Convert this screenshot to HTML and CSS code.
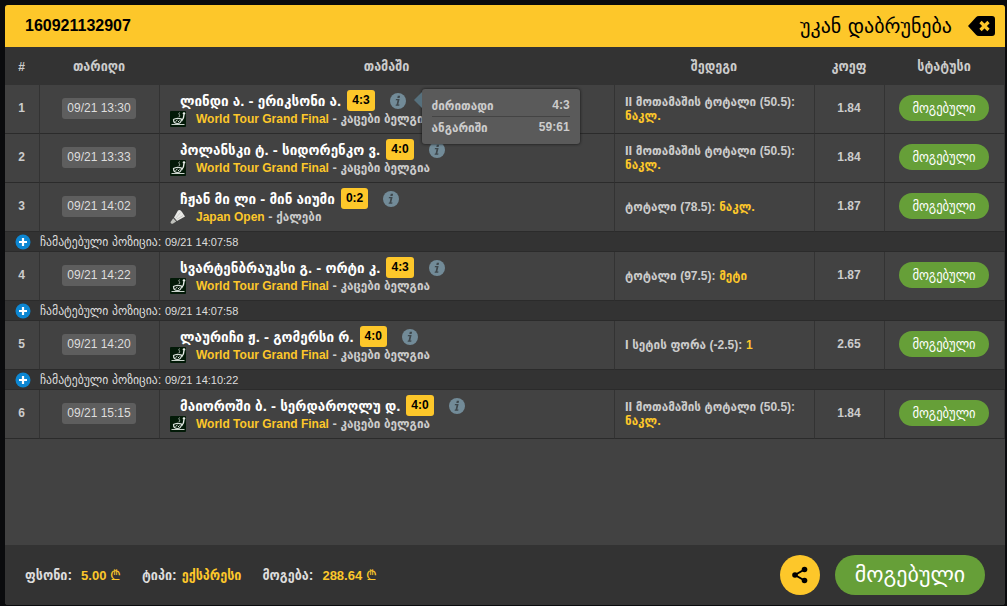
FILE: index.html
```html
<!DOCTYPE html>
<html lang="ka">
<head>
<meta charset="utf-8">
<title>160921132907</title>
<link rel="stylesheet" href="styles.css">
</head>
<body>
<svg class="sprite" aria-hidden="true">
  <symbol id="info" viewBox="0 0 16 16">
    <circle cx="8" cy="8" r="8" fill="#728b98"/>
    <path d="M7.8 2.7h2.3l-.5 2.2H7.3zM6 6h3.6l-1.3 5.4h1.2l-.3 1.3H5.6l.3-1.3h.7l.9-4.1H5.7z" fill="#3e474c"/>
  </symbol>
  <symbol id="snooker" viewBox="0 0 16 16">
    <rect width="16" height="16" rx="1" fill="#031a08"/>
    <path d="M1.500 13.500h13" stroke="#c9d3cb" fill="none"/>
    <circle cx="14" cy="2.500" r="1.300" fill="#e6ece7"/>
    <path d="M14 3.500c0 3-1 5-2.500 6.500" stroke="#e6ece7" stroke-width="1.400" fill="none"/>
    <path d="M9.500 1.500c-2 1.500 1.500 2.500-.5 4.500" stroke="#aab5ac" fill="none"/>
    <path d="M3.500 8.500c2-1.500 6-1.500 8-.5-.2 3-2 4.500-4 4.500s-4-1-4-4z" fill="none" stroke="#d7dfd9" stroke-width="1.200"/>
    <path d="M5.500 10.500l2-1.500M8 11l1.500-1.500" stroke="#d7dfd9"/>
  </symbol>
  <symbol id="shuttle" viewBox="0 0 16 16">
    <path d="M8 1.500Q10 0 12 3L15 7.500 7 12 4 8.500z" fill="#e9e9e6"/>
    <path d="M5.500 9.500l5-6M6.500 10.500l6.500-4" stroke="#b5b5b0" stroke-width=".6"/>
    <path d="M3.200 9.300l3 3.200-3.500 2.300c-1 .3-2.500-.8-2.100-1.800z" fill="#bfc0bb"/>
  </symbol>
  <symbol id="plus" viewBox="0 0 16 16">
    <circle cx="8" cy="8" r="7.500" fill="#0d87d2"/>
    <path d="M8 4v8M4 8h8" stroke="#fff" stroke-width="2.200"/>
  </symbol>
</svg>
<main class="ticket">
  <header class="bar">
    <h1 class="number">160921132907</h1>
    <button class="back" type="button">უკან დაბრუნება
      <svg class="back-icon" viewBox="0 0 27 20" aria-hidden="true">
        <path d="M0 10L8 1.200Q9 0 11 0h13q3 0 3 3v14q0 3-3 3H11q-2 0-3-1.200z"/>
        <path d="M12.500 6l8 8M20.500 6l-8 8" stroke="#fdc72a" stroke-width="3.200"/>
      </svg>
    </button>
  </header>
  <table class="bets">
    <colgroup><col class="c-num"><col class="c-date"><col class="c-game"><col class="c-result"><col class="c-odds"><col class="c-status"></colgroup>
    <thead>
      <tr><th><span class="num">#</span></th><th>თარიღი</th><th>თამაში</th><th>შედეგი</th><th>კოეფ</th><th>სტატუსი</th></tr>
    </thead>
    <tbody>
      <tr class="bet">
        <td>1</td><td><time class="date">09/21 13:30</time></td>
        <td class="game">
          <div class="match"><span>ლინდი ა. - ერიკსონი ა.</span><b class="score">4:3</b>
            <span class="info"><svg class="icon"><use href="#info"/></svg>
              <span class="tip" role="tooltip">
                <span class="tip-row"><span>ძირითადი</span><b class="num">4:3</b></span>
                <span class="tip-row"><span>ანგარიში</span><b class="num">59:61</b></span>
              </span>
            </span>
          </div>
          <div class="league"><svg class="icon"><use href="#snooker"/></svg><p class="name"><b>World Tour Grand Final</b> - კაცები ბელგია</p></div>
        </td>
        <td class="result">II მოთამაშის ტოტალი <span class="num">(50.5):</span> <b>ნაკლ.</b></td>
        <td>1.84</td><td><span class="pill">მოგებული</span></td>
      </tr>
      <tr class="bet">
        <td>2</td><td><time class="date">09/21 13:33</time></td>
        <td class="game">
          <div class="match"><span>პოლანსკი ტ. - სიდორენკო ვ.</span><b class="score">4:0</b><span class="info"><svg class="icon"><use href="#info"/></svg></span></div>
          <div class="league"><svg class="icon"><use href="#snooker"/></svg><p class="name"><b>World Tour Grand Final</b> - კაცები ბელგია</p></div>
        </td>
        <td class="result">II მოთამაშის ტოტალი <span class="num">(50.5):</span> <b>ნაკლ.</b></td>
        <td>1.84</td><td><span class="pill">მოგებული</span></td>
      </tr>
      <tr class="bet">
        <td>3</td><td><time class="date">09/21 14:02</time></td>
        <td class="game">
          <div class="match"><span>ჩჟან მი ლი - მინ აიუმი</span><b class="score">0:2</b><span class="info"><svg class="icon"><use href="#info"/></svg></span></div>
          <div class="league"><svg class="icon"><use href="#shuttle"/></svg><p class="name"><b>Japan Open</b> - ქალები</p></div>
        </td>
        <td class="result">ტოტალი <span class="num">(78.5):</span> <b>ნაკლ.</b></td>
        <td>1.87</td><td><span class="pill">მოგებული</span></td>
      </tr>
      <tr class="added"><td><svg class="icon"><use href="#plus"/></svg></td><td colspan="5">ჩამატებული პოზიცია: <time>09/21 14:07:58</time></td></tr>
      <tr class="bet">
        <td>4</td><td><time class="date">09/21 14:22</time></td>
        <td class="game">
          <div class="match"><span>სვარტენბრაუკსი გ. - ორტი კ.</span><b class="score">4:3</b><span class="info"><svg class="icon"><use href="#info"/></svg></span></div>
          <div class="league"><svg class="icon"><use href="#snooker"/></svg><p class="name"><b>World Tour Grand Final</b> - კაცები ბელგია</p></div>
        </td>
        <td class="result">ტოტალი <span class="num">(97.5):</span> <b>მეტი</b></td>
        <td>1.87</td><td><span class="pill">მოგებული</span></td>
      </tr>
      <tr class="added"><td><svg class="icon"><use href="#plus"/></svg></td><td colspan="5">ჩამატებული პოზიცია: <time>09/21 14:07:58</time></td></tr>
      <tr class="bet">
        <td>5</td><td><time class="date">09/21 14:20</time></td>
        <td class="game">
          <div class="match"><span>ლაურიჩი ჟ. - გომერსი რ.</span><b class="score">4:0</b><span class="info"><svg class="icon"><use href="#info"/></svg></span></div>
          <div class="league"><svg class="icon"><use href="#snooker"/></svg><p class="name"><b>World Tour Grand Final</b> - კაცები ბელგია</p></div>
        </td>
        <td class="result">I სეტის ფორა <span class="num">(-2.5):</span> <b class="num">1</b></td>
        <td>2.65</td><td><span class="pill">მოგებული</span></td>
      </tr>
      <tr class="added"><td><svg class="icon"><use href="#plus"/></svg></td><td colspan="5">ჩამატებული პოზიცია: <time>09/21 14:10:22</time></td></tr>
      <tr class="bet">
        <td>6</td><td><time class="date">09/21 15:15</time></td>
        <td class="game">
          <div class="match"><span>მაიოროში ბ. - სერდაროღლუ დ.</span><b class="score">4:0</b><span class="info"><svg class="icon"><use href="#info"/></svg></span></div>
          <div class="league"><svg class="icon"><use href="#snooker"/></svg><p class="name"><b>World Tour Grand Final</b> - კაცები ბელგია</p></div>
        </td>
        <td class="result">II მოთამაშის ტოტალი <span class="num">(50.5):</span> <b>ნაკლ.</b></td>
        <td>1.84</td><td><span class="pill">მოგებული</span></td>
      </tr>
    </tbody>
  </table>
  <footer class="summary">
    <dl class="totals">
      <div class="total"><dt>ფსონი:</dt><dd class="money">5.00 <span class="lari">₾</span></dd></div>
      <div class="total"><dt>ტიპი:</dt><dd>ექსპრესი</dd></div>
      <div class="total"><dt>მოგება:</dt><dd class="money">288.64 <span class="lari">₾</span></dd></div>
    </dl>
    <button class="share" type="button" aria-label="გაზიარება">
      <svg viewBox="0 0 16 18" aria-hidden="true"><path d="M12.500 3.500L3 9l9.500 5.500" fill="none" stroke="#000" stroke-width="2"/><circle cx="12.500" cy="3.500" r="2.800"/><circle cx="3" cy="9" r="2.800"/><circle cx="12.500" cy="14.500" r="2.800"/></svg>
    </button>
    <strong class="outcome">მოგებული</strong>
  </footer>
</main>
</body>
</html>
```

FILE: styles.css
```css
* { box-sizing: border-box; }
body {
  margin: 0;
  min-height: 100vh;
  display: flex;
  padding: 5px 2px 1px 5px;
  background: #0a0b0d;
  color: #ccc;
  font: bold 12px/16px "Liberation Sans", "DejaVu Sans Condensed", sans-serif;
}
.sprite { position: absolute; width: 0; height: 0; }
.icon { display: block; width: 16px; height: 16px; }
.num { font-size: 12px; }
.ticket {
  flex: 1;
  display: flex;
  flex-direction: column;
  background: #424242;
  border-radius: 3px;
}
.bar {
  display: flex;
  justify-content: space-between;
  align-items: center;
  height: 42px;
  padding: 0 10px 0 20px;
  background: #fdc72a;
  color: #000;
  border-radius: 3px 3px 0 0;
}
.number { margin: 0; font-size: 16px; line-height: 20px; }
.back {
  display: flex;
  align-items: center;
  gap: 16px;
  padding: 0;
  border: 0;
  background: none;
  font: 20px/24px "DejaVu Sans", sans-serif;
  color: #000;
}
.back-icon { width: 27px; height: 20px; }
.bets { width: 100%; border-collapse: separate; border-spacing: 0; table-layout: fixed; text-align: center; }
.c-num { width: 35px; }
.c-date, .c-status { width: 120px; }
.c-result { width: 200px; }
.c-odds { width: 70px; }
th { height: 38px; padding: 0 2px 0 0; background: #333; font-size: 14px; }
td { padding: 0; }
.bet td { height: 49px; padding: 0 1px 2px 0; border-bottom: 1px solid #2b2b2b; border-right: 1px solid #333; }
.date {
  display: inline-block;
  padding: 2px 5px 3px;
  background: #5e5e5e;
  border-radius: 3px;
  color: #ddd;
  font-weight: normal;
}
.bet .game { padding: 5px 10px 6px; text-align: left; }
.match {
  display: flex;
  align-items: center;
  gap: 6px;
  height: 21px;
  padding-left: 10px;
  color: #fff;
  font-size: 15px;
  white-space: nowrap;
}
.score {
  padding: 0 5px;
  background: #fdc72a;
  border-radius: 3px;
  color: #000;
  font-size: 12px;
  line-height: 21px;
}
.info { position: relative; margin-left: 9px; }
.tip {
  position: absolute;
  z-index: 1;
  left: 32px;
  top: -4px;
  width: 158px;
  padding: 6px 10px;
  background: #5a5a5a;
  border-radius: 3px;
  box-shadow: 0 0 3px #111;
  color: #ccc;
  font-size: 13px;
}
.tip::before {
  content: "";
  position: absolute;
  left: -8px;
  top: 3px;
  border: 8px solid transparent;
  border-left: 0;
  border-right-color: #56707d;
}
.tip-row { display: flex; justify-content: space-between; line-height: 21px; }
.tip-row + .tip-row { border-top: 1px solid #444; }
.league { display: flex; gap: 10px; }
.name { margin: 0; font-size: 13px; }
.name b { color: #fdc72a; font-size: 12px; }
.bet .result { padding: 0 10px; text-align: left; font-size: 13px; line-height: 14px; }
.result b { color: #fdc72a; }
.pill {
  display: inline-block;
  width: 90px;
  background: #669f38;
  border-radius: 13px;
  color: #fff;
  font-size: 14px;
  font-weight: normal;
  line-height: 26px;
}
.added { background: #333; color: #ddd; font-size: 13px; }
.added td { height: 20px; border-bottom: 1px solid #2b2b2b; font-weight: normal; text-align: left; }
.added time { font-size: 11px; }
.added .icon { margin-left: 10px; }
.summary {
  display: flex;
  align-items: center;
  gap: 15px;
  margin-top: auto;
  padding: 10px 20px;
  background: #333;
  border-radius: 0 0 3px 3px;
}
.totals { display: flex; flex: 1; gap: 21px; margin: 0; color: #ddd; font-size: 14px; }
.total { display: flex; align-items: baseline; gap: 5px; }
.total dd { margin: 0; color: #fdc72a; }
.total .money { padding-left: 4px; font-size: 13px; }
.lari { font-size: 14px; font-weight: normal; }
.share {
  display: grid;
  place-items: center;
  width: 40px;
  height: 40px;
  padding: 0;
  border: 0;
  border-radius: 50%;
  background: #fdc72a;
}
.share svg { width: 16px; height: 18px; }
.outcome {
  width: 150px;
  border-radius: 20px;
  background: #669f38;
  color: #fff;
  font: 22px/40px "DejaVu Sans", sans-serif;
  text-align: center;
}
```
